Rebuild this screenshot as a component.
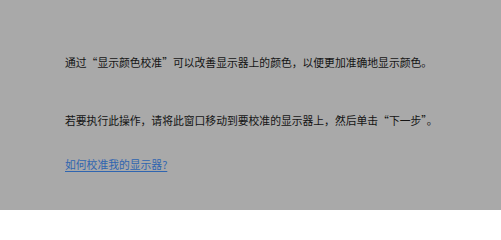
export default function App() {
  return (
    <div
      className="w-[501px] h-[210px] bg-[#a9a9a9] pl-[65px] pt-[55px] text-[#141414] text-[10.8px] leading-[14px] overflow-hidden"
      style={{ fontFamily: '"Noto Sans CJK SC", "Microsoft YaHei", sans-serif' }}
    >
      <p className="whitespace-nowrap">通过“显示颜色校准”可以改善显示器上的颜色，以便更加准确地显示颜色。</p>
      <p className="mt-[44px] whitespace-nowrap">若要执行此操作，请将此窗口移动到要校准的显示器上，然后单击“下一步”。</p>
      <a href="#" className="mt-[30px] block w-fit whitespace-nowrap text-[#2f65b0] underline underline-offset-2">
        如何校准我的显示器?
      </a>
    </div>
  );
}
